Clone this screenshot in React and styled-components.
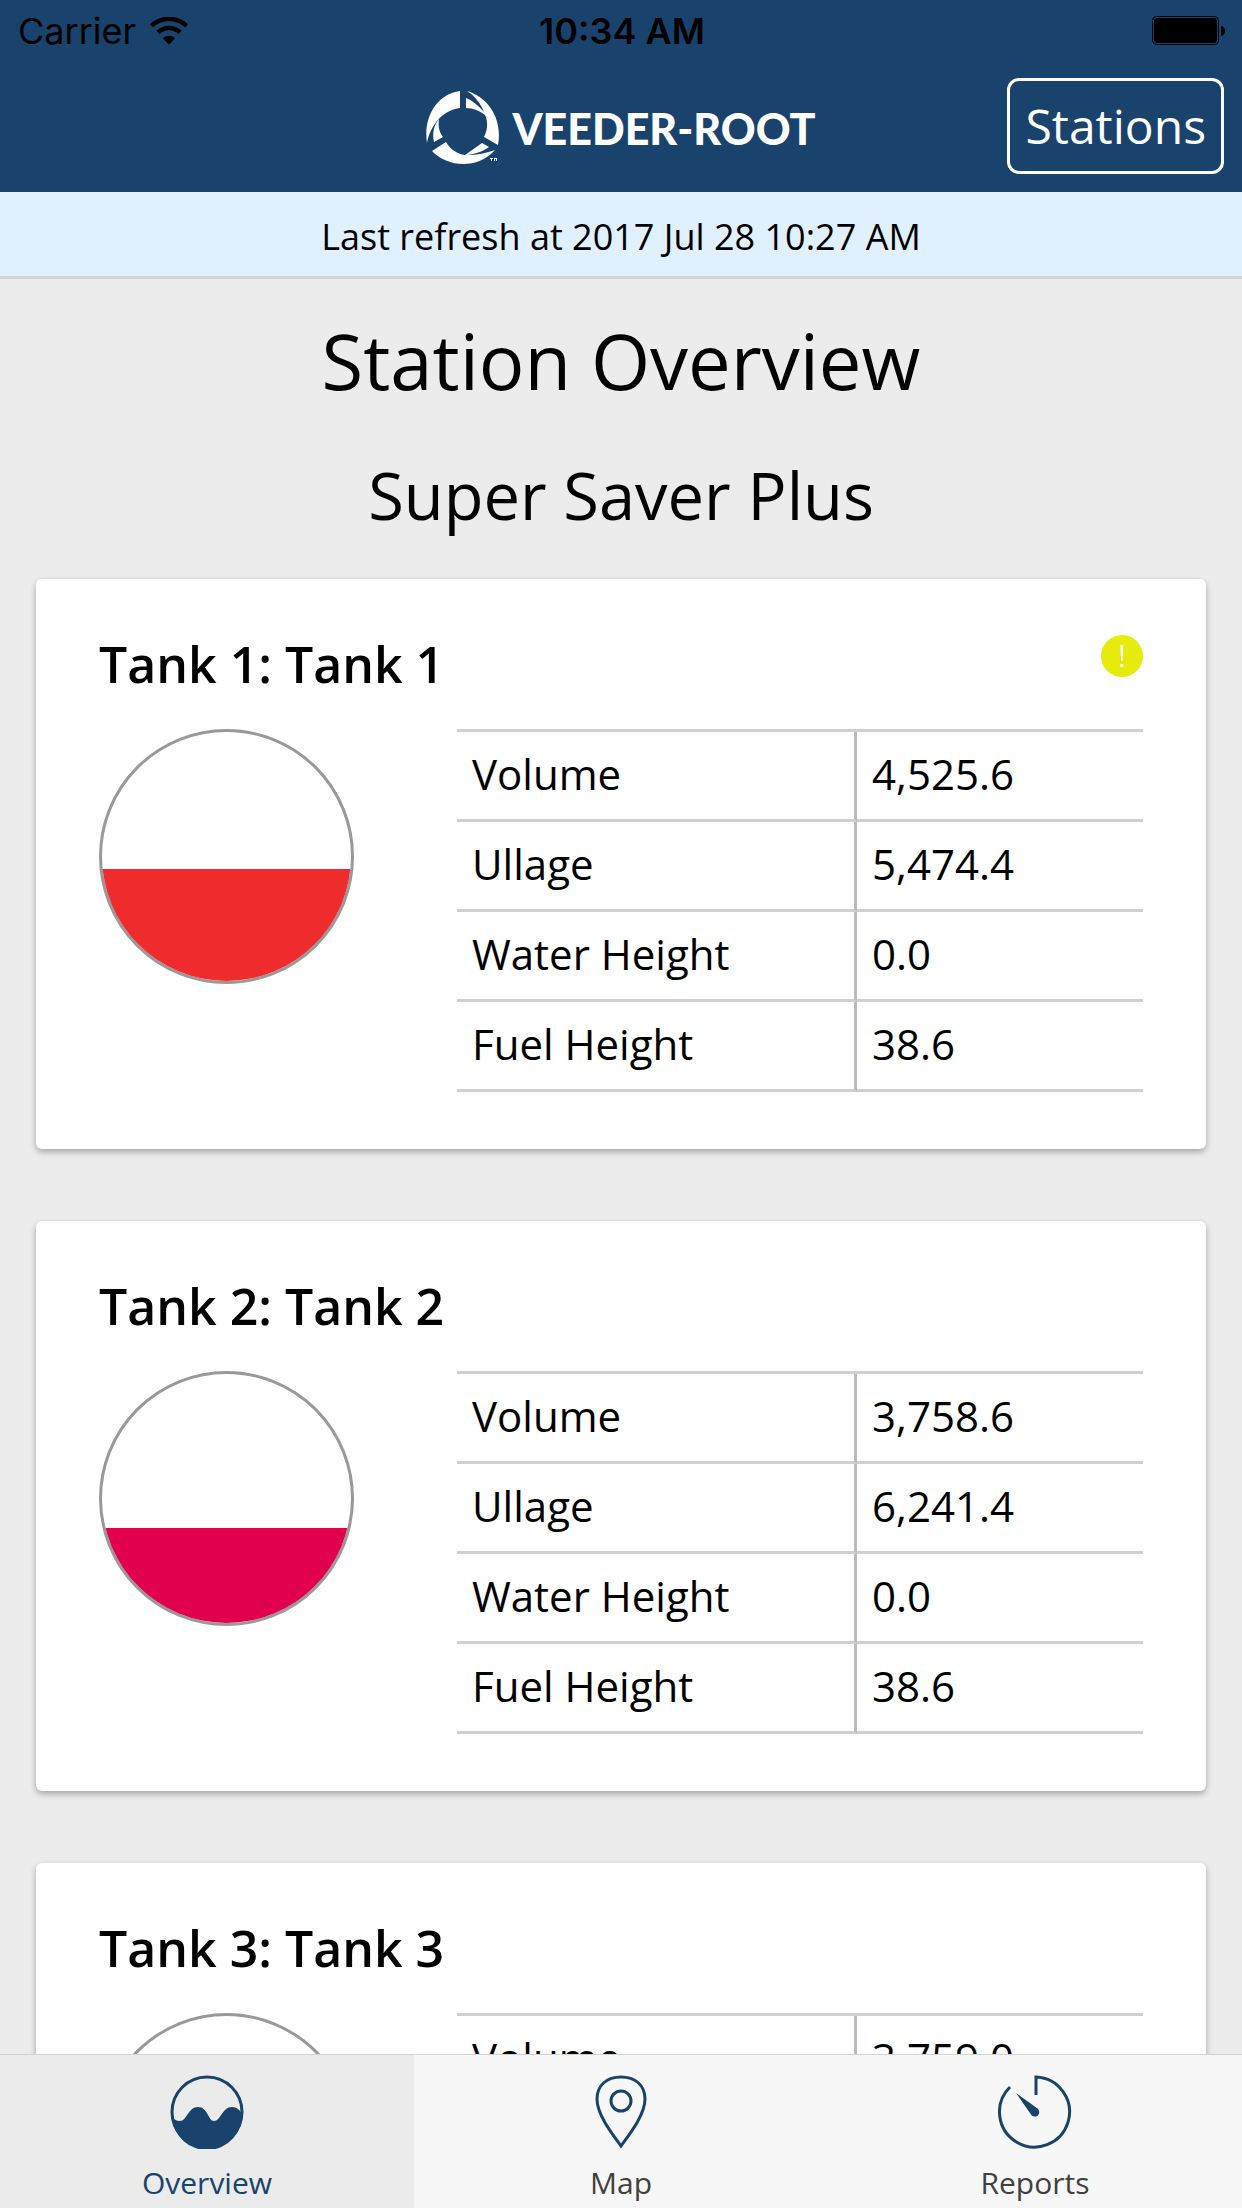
import React, { useState } from "react";
import styled, { createGlobalStyle } from "styled-components";

const tanks = [
  {
    id: 1,
    name: "Tank 1",
    color: "#ef2b2d",
    level: 45,
    alert: true,
    readings: [
      ["Volume", "4,525.6"],
      ["Ullage", "5,474.4"],
      ["Water Height", "0.0"],
      ["Fuel Height", "38.6"],
    ],
  },
  {
    id: 2,
    name: "Tank 2",
    color: "#e0004d",
    level: 38,
    readings: [
      ["Volume", "3,758.6"],
      ["Ullage", "6,241.4"],
      ["Water Height", "0.0"],
      ["Fuel Height", "38.6"],
    ],
  },
  {
    id: 3,
    name: "Tank 3",
    color: "#ef2b2d",
    level: 38,
    readings: [
      ["Volume", "3,759.0"],
      ["Ullage", "6,241.0"],
      ["Water Height", "0.0"],
      ["Fuel Height", "38.6"],
    ],
  },
];

const tabs = [
  { id: "overview", label: "Overview", Icon: OverviewIcon },
  { id: "map", label: "Map", Icon: MapIcon },
  { id: "reports", label: "Reports", Icon: ReportsIcon },
];

function WifiIcon() {
  return (
    <svg width="38" height="28" viewBox="0 0 38 28" aria-hidden="true">
      <path d="M1.5 9 A25 25 0 0 1 36.5 9" fill="none" stroke="#000" strokeWidth="4.500" />
      <path d="M8 15.500 A16 16 0 0 1 30 15.500" fill="none" stroke="#000" strokeWidth="4.500" />
      <path d="M19 27.500 L12.800 21.300 A9 9 0 0 1 25.200 21.300 Z" />
    </svg>
  );
}

function BatteryIcon() {
  return (
    <svg width="74" height="30" viewBox="0 0 74 30" aria-hidden="true">
      <rect x="0.5" y="0.5" width="66" height="28" rx="4" fill="none" stroke="#000" />
      <rect x="2" y="2" width="63" height="25" rx="3" />
      <path d="M69 10 A4 5 0 0 1 69 20 Z" />
    </svg>
  );
}

function LogoMark() {
  return (
    <svg width="75" height="74" viewBox="0 0 75 74" fill="#fff" aria-hidden="true">
      <path d="M34 0 V17 C18 19 5 32 1 52 C-3 26 11 3 34 0 Z" />
      <path d="M13 28 C12 35 13 41 17 46 L8 51 C6 42 8 34 13 28 Z" />
      <path d="M41 0 C62 6 77 28 72 54 L58 46 C62 38 62 30 59 24 C54 20 47 17 40 17 V7 C47 10 53 15 58 21 C55 13 49 5 41 0 Z" />
      <path d="M6 60 L20 51 C24 58 31 63 39 64 L56 52 L63 56 C56 61 49 63 41 64 C51 64 61 62 69 59 C51 79 21 76 6 60 Z" />
      <path d="M64 67 h3 v1 h-1 v2 h-1 v-2 h-1 Z M68 67 h3 v3 h-1 v-2 h-1 v2 h-1 Z" />
    </svg>
  );
}

function OverviewIcon() {
  return (
    <svg width="74" height="74" viewBox="0 0 74 74" aria-hidden="true">
      <circle cx="37" cy="37" r="35" fill="none" stroke="#19426c" strokeWidth="3" />
      <path
        d="M2 42 C4 44 6 46 10 46 C17 46 18 32 28 32 C38 32 38 46 44 46 C51 46 52 32 62 32 C67 32 69 35 72 38 A35 35 0 0 1 2 42 Z"
        fill="#19426c"
      />
    </svg>
  );
}

function MapIcon() {
  return (
    <svg width="74" height="74" viewBox="0 0 74 74" fill="none" stroke="#19426c" strokeWidth="3" aria-hidden="true">
      <path d="M37 71 C29 60 13 40 13 24 C13 10 23 2 37 2 C51 2 61 10 61 24 C61 40 45 60 37 71 Z" />
      <circle cx="37" cy="26" r="10" />
    </svg>
  );
}

function ReportsIcon() {
  return (
    <svg width="74" height="74" viewBox="0 0 74 74" aria-hidden="true">
      <path d="M38 20 V2 A35 35 0 1 1 12 12" fill="none" stroke="#19426c" strokeWidth="3" />
      <path d="M18 18 L39.500 33.500 A4.500 4.500 0 1 1 33 39.500 Z" fill="#19426c" />
    </svg>
  );
}

function TankCard({ tank }) {
  return (
    <Card>
      <CardHeader>
        <CardTitle>
          Tank {tank.id}: {tank.name}
        </CardTitle>
        {tank.alert && (
          <AlertBadge role="img" aria-label="Alert">
            <svg width="42" height="42" viewBox="0 0 42 42" fill="#fff">
              <path d="M19.300 10 h3 l-0.800 16 h-1.400 Z" />
              <circle cx="20.800" cy="30.500" r="1.700" />
            </svg>
          </AlertBadge>
        )}
      </CardHeader>
      <CardBody>
        <Gauge>
          <GaugeFill $color={tank.color} style={{ height: `${tank.level}%` }} />
        </Gauge>
        <Readings>
          <tbody>
            {tank.readings.map(([label, value]) => (
              <tr key={label}>
                <th scope="row">{label}</th>
                <td>{value}</td>
              </tr>
            ))}
          </tbody>
        </Readings>
      </CardBody>
    </Card>
  );
}

function App() {
  const [activeTab, setActiveTab] = useState("overview");

  return (
    <Page>
      <GlobalStyle />
      <Header>
        <StatusBar>
          <Carrier>
            Carrier <WifiIcon />
          </Carrier>
          <Clock>10:34 AM</Clock>
          <Battery>
            <BatteryIcon />
          </Battery>
        </StatusBar>
        <NavBar>
          <Brand>
            <LogoMark />
            VEEDER-ROOT
          </Brand>
          <StationsButton type="button">Stations</StationsButton>
        </NavBar>
      </Header>
      <RefreshBar>Last refresh at 2017 Jul 28 10:27 AM</RefreshBar>
      <Content>
        <Title>Station Overview</Title>
        <StationName>Super Saver Plus</StationName>
        <CardList>
          {tanks.map((tank) => (
            <TankCard key={tank.id} tank={tank} />
          ))}
        </CardList>
      </Content>
      <TabBar>
        {tabs.map(({ id, label, Icon }) => (
          <Tab key={id} href={`#${id}`} $active={id === activeTab} onClick={() => setActiveTab(id)}>
            <Icon />
            {label}
          </Tab>
        ))}
      </TabBar>
    </Page>
  );
}

export default App;

const GlobalStyle = createGlobalStyle`
  * {
    box-sizing: border-box;
  }

  body {
    margin: 0;
    color: #000;
    background-color: #ececec;
    font-family: "Open Sans", "Noto Sans", sans-serif;
  }
`;

const Page = styled.div`
  display: flex;
  flex-direction: column;
  height: 100vh;
`;

const Header = styled.header`
  flex: none;
  background-color: #19426c;
`;

const StatusBar = styled.div`
  display: grid;
  grid-template-columns: 1fr auto 1fr;
  align-items: center;
  height: 60px;
  padding: 2px 16px 0 18px;
  font-family: Inter, "Liberation Sans", sans-serif;
  font-size: 36px;
`;

const Carrier = styled.span`
  display: flex;
  align-items: center;
  gap: 14px;
`;

const Clock = styled.span`
  font-weight: 600;
`;

const Battery = styled.span`
  display: flex;
  justify-content: flex-end;
`;

const NavBar = styled.div`
  display: grid;
  grid-template-columns: 1fr auto 1fr;
  align-items: center;
  height: 132px;
  padding: 0 18px;
`;

const Brand = styled.div`
  grid-column: 2;
  display: flex;
  align-items: center;
  gap: 11px;
  padding-top: 4px;
  color: #fff;
  font-family: Lato, sans-serif;
  font-size: 43px;
  font-weight: 900;
`;

const StationsButton = styled.button`
  justify-self: end;
  height: 96px;
  padding: 0 15px 2px;
  border: 3px solid #fff;
  border-radius: 12px;
  background: none;
  color: #fff;
  font-family: inherit;
  font-size: 48px;
  font-weight: 400;
  cursor: pointer;
`;

const RefreshBar = styled.div`
  flex: none;
  padding: 21px 0 15px;
  border-bottom: 3px solid #d4d4d4;
  background-color: #e0f0ff;
  font-size: 36px;
  line-height: 48px;
  text-align: center;
`;

const Content = styled.main`
  flex: 1;
  min-height: 0;
  overflow-y: auto;
  scrollbar-width: none;
  padding: 36px;
`;

const Title = styled.h1`
  margin: 0;
  font-size: 76px;
  font-weight: 400;
  line-height: 92px;
  text-align: center;
`;

const StationName = styled.h2`
  margin: 46px 0 42px;
  font-size: 65px;
  font-weight: 400;
  line-height: 84px;
  text-align: center;
`;

const CardList = styled.div`
  display: flex;
  flex-direction: column;
  gap: 72px;
`;

const Card = styled.section`
  padding: 56px 63px 57px;
  border-radius: 6px;
  background-color: #fff;
  box-shadow: 0 3px 6px rgba(0, 0, 0, 0.3);
`;

const CardHeader = styled.div`
  display: flex;
  align-items: flex-start;
  justify-content: space-between;
  height: 94px;
`;

const CardTitle = styled.h3`
  margin: 0;
  font-size: 50px;
  font-weight: 600;
  line-height: 58px;
`;

const AlertBadge = styled.span`
  display: flex;
  width: 42px;
  height: 42px;
  border-radius: 50%;
  background-color: #e6eb0b;
`;

const CardBody = styled.div`
  display: flex;
  align-items: flex-start;
  gap: 103px;
`;

const Gauge = styled.div`
  flex: none;
  display: flex;
  align-items: flex-end;
  width: 255px;
  height: 255px;
  overflow: hidden;
  border: 3px solid #999;
  border-radius: 50%;
`;

const GaugeFill = styled.div`
  width: 100%;
  background-color: ${(props) => props.$color};
`;

const Readings = styled.table`
  flex: 1;
  table-layout: fixed;
  border-collapse: separate;
  border-spacing: 0;
  border-top: 3px solid #d0d0d0;
  font-size: 42px;
  line-height: 60px;

  th,
  td {
    height: 90px;
    padding: 0 15px 3px;
    border-bottom: 3px solid #d0d0d0;
    font-weight: 400;
    text-align: left;
  }

  th {
    width: 400px;
    border-right: 3px solid #bbb;
  }
`;

const TabBar = styled.nav`
  flex: none;
  display: grid;
  grid-template-columns: repeat(3, 1fr);
  border-top: 1px solid #d2d2d2;
  background-color: #f7f7f7;
`;

const Tab = styled.a`
  display: flex;
  flex-direction: column;
  align-items: center;
  gap: 14px;
  padding: 20px 0 5px;
  background-color: ${(props) => (props.$active ? "#ebebeb" : "transparent")};
  color: ${(props) => (props.$active ? "#19426c" : "#404040")};
  font-size: 30px;
  line-height: 40px;
  text-decoration: none;
`;
